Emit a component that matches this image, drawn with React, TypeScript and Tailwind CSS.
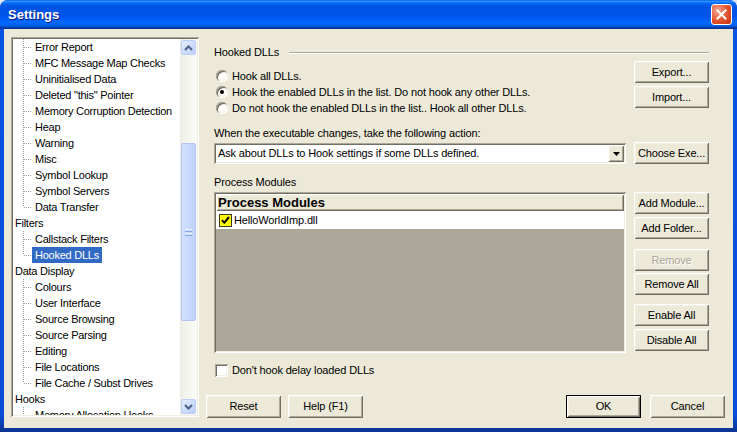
import React from 'react';

const sunken =
  'shadow-[inset_1px_1px_0_#aca899,inset_-1px_-1px_0_#ffffff,inset_2px_2px_0_#716f64,inset_-2px_-2px_0_#f1efe2]';
const raised =
  'shadow-[inset_1px_1px_0_#ffffff,inset_-1px_-1px_0_#716f64,inset_2px_2px_0_#f1efe2,inset_-2px_-2px_0_#aca899]';

type TreeItem = { t: string; root?: boolean; last?: boolean; sel?: boolean };

const TREE: TreeItem[] = [
  { t: 'Error Report' },
  { t: 'MFC Message Map Checks' },
  { t: 'Uninitialised Data' },
  { t: 'Deleted "this" Pointer' },
  { t: 'Memory Corruption Detection' },
  { t: 'Heap' },
  { t: 'Warning' },
  { t: 'Misc' },
  { t: 'Symbol Lookup' },
  { t: 'Symbol Servers' },
  { t: 'Data Transfer', last: true },
  { t: 'Filters', root: true },
  { t: 'Callstack Filters' },
  { t: 'Hooked DLLs', last: true, sel: true },
  { t: 'Data Display', root: true },
  { t: 'Colours' },
  { t: 'User Interface' },
  { t: 'Source Browsing' },
  { t: 'Source Parsing' },
  { t: 'Editing' },
  { t: 'File Locations' },
  { t: 'File Cache / Subst Drives', last: true },
  { t: 'Hooks', root: true },
  { t: 'Memory Allocation Hooks' },
];

function Btn({
  label,
  size = 'w-[75px] h-[22px]',
  disabled = false,
  def = false,
  className = '',
}: {
  label: string;
  size?: string;
  disabled?: boolean;
  def?: boolean;
  className?: string;
}) {
  return (
    <div className={`${size} ${className} ${def ? 'border border-black' : ''} flex shrink-0 bg-[#ece9d8]`}>
      <div
        className={`flex flex-1 items-center justify-center ${raised} ${
          disabled ? 'text-[#aca899] [text-shadow:1px_1px_0_#ffffff]' : 'text-black'
        }`}
      >
        {label}
      </div>
    </div>
  );
}

function Radio({ checked = false }: { checked?: boolean }) {
  return (
    <div
      className={`flex h-[12px] w-[12px] shrink-0 items-center justify-center rounded-full bg-white shadow-[inset_1px_1px_0_#aca899,inset_-1px_-1px_0_#ffffff,inset_2px_2px_0_#716f64,inset_-2px_-2px_0_#f1efe2]`}
    >
      {checked && <div className="h-[4px] w-[4px] rounded-full bg-black" />}
    </div>
  );
}

function TreeRow({ item }: { item: TreeItem }) {
  if (item.root) {
    return (
      <div className="flex h-[16px] shrink-0 items-center pl-[2px] leading-[16px] whitespace-nowrap">{item.t}</div>
    );
  }
  return (
    <div className="flex h-[16px] shrink-0 items-center whitespace-nowrap">
      <svg width="19" height="16" className="shrink-0">
        <line
          x1="10.5"
          y1="0"
          x2="10.5"
          y2={item.last ? 8 : 16}
          stroke="#a0a0a0"
          strokeWidth="1"
          strokeDasharray="1 1"
        />
        <line x1="11" y1="8.5" x2="19" y2="8.5" stroke="#a0a0a0" strokeWidth="1" strokeDasharray="1 1" />
      </svg>
      <span
        className={`h-[16px] px-[3px] leading-[16px] ${item.sel ? 'bg-[#316ac5] text-white' : 'text-black'}`}
      >
        {item.t}
      </span>
    </div>
  );
}

function ScrollArrow({ up }: { up?: boolean }) {
  return (
    <div className="flex h-[17px] w-[17px] shrink-0 p-[1px]">
      <div className="flex flex-1 items-center justify-center rounded-[2px] border border-[#b9cdf6] bg-[linear-gradient(135deg,#e3ebfe,#bccffa)]">
        <svg width="9" height="6" viewBox="0 0 9 6">
          <polyline
            points={up ? '1,5 4.5,1.5 8,5' : '1,1 4.5,4.5 8,1'}
            fill="none"
            stroke="#4d6185"
            strokeWidth="2"
          />
        </svg>
      </div>
    </div>
  );
}

function Tree() {
  return (
    <div className={`flex h-[380px] w-[188px] shrink-0 bg-white p-[2px] ${sunken}`}>
      <div className="flex min-w-0 flex-1 flex-col overflow-hidden tracking-[-0.25px]">
        {TREE.map((it, i) => (
          <TreeRow key={i} item={it} />
        ))}
      </div>
      <div className="flex w-[17px] shrink-0 flex-col bg-[linear-gradient(90deg,#eeede5,#fdfdfa)]">
        <ScrollArrow up />
        <div className="flex flex-1 flex-col px-[1px]">
          <div className="mt-[87px] flex h-[178px] items-center justify-center rounded-[2px] border border-[#b2c6f5] bg-[linear-gradient(90deg,#d3e0fd,#c0d2fa)]">
            <div className="flex flex-col gap-[1px]">
              <div className="h-[1px] w-[7px] bg-[#eef3fe]" />
              <div className="h-[1px] w-[7px] bg-[#8fa9e6]" />
              <div className="h-[1px] w-[7px] bg-[#eef3fe]" />
              <div className="h-[1px] w-[7px] bg-[#8fa9e6]" />
            </div>
          </div>
        </div>
        <ScrollArrow />
      </div>
    </div>
  );
}

function RightPanel() {
  return (
    <div className="ml-[7px] flex flex-1 flex-col">
      <div className="flex flex-col pl-[8px] pr-[16px]">
        {/* group header */}
        <div className="mt-[9px] flex h-[13px] items-center leading-[13px]">
          <span>Hooked DLLs</span>
          <div className="ml-[10px] h-[2px] flex-1 border-t border-b border-t-[#aca899] border-b-white" />
        </div>

        {/* radios + export/import */}
        <div className="mt-[2px] flex justify-between">
          <div className="flex flex-col pt-[7px] pl-[2px]">
            <div className="flex h-[16px] items-center gap-[4px]">
              <Radio />
              <span>Hook all DLLs.</span>
            </div>
            <div className="flex h-[16px] items-center gap-[4px]">
              <Radio checked />
              <span>Hook the enabled DLLs in the list. Do not hook any other DLLs.</span>
            </div>
            <div className="flex h-[16px] items-center gap-[4px]">
              <Radio />
              <span>Do not hook the enabled DLLs in the list.. Hook all other DLLs.</span>
            </div>
          </div>
          <div className="flex flex-col gap-[3px]">
            <Btn label="Export..." />
            <Btn label="Import..." />
          </div>
        </div>

        <div className="mt-[11px] h-[13px] leading-[13px]">When the executable changes, take the following action:</div>

        {/* dropdown row */}
        <div className="mt-[2px] flex h-[22px] justify-between">
          <div className={`mt-[1px] flex h-[21px] w-[412px] bg-white p-[2px] ${sunken}`}>
            <div className="flex flex-1 items-center pl-[2px] whitespace-nowrap">
              Ask about DLLs to Hook settings if some DLLs defined.
            </div>
            <div className={`flex h-full w-[16px] items-center justify-center bg-[#ece9d8] ${raised}`}>
              <svg width="7" height="4" viewBox="0 0 7 4">
                <polygon points="0,0 7,0 3.5,4" fill="#000" />
              </svg>
            </div>
          </div>
          <Btn label="Choose Exe..." />
        </div>

        <div className="mt-[12px] h-[13px] leading-[13px]">Process Modules</div>

        {/* list + side buttons */}
        <div className="mt-[3px] flex justify-between">
          <div className={`flex h-[161px] w-[412px] flex-col bg-[#aca899] p-[2px] ${sunken}`}>
            <div
              className={`flex h-[17px] shrink-0 items-center bg-[#ece9d8] pl-[2px] text-[13px] font-bold tracking-normal ${raised}`}
            >
              Process Modules
            </div>
            <div className="flex h-[18px] shrink-0 items-center gap-[2px] bg-white pl-[3px]">
              <svg width="13" height="13" viewBox="0 0 13 13" className="shrink-0">
                <rect x="0.5" y="0.5" width="12" height="12" fill="#ffff00" stroke="#3a3a1a" />
                <path d="M3 6.2 L5.3 8.8 L10 3" fill="none" stroke="#000" strokeWidth="2" />
              </svg>
              <span>HelloWorldImp.dll</span>
            </div>
          </div>
          <div className="flex w-[75px] flex-col">
            <Btn label="Add Module..." />
            <Btn label="Add Folder..." className="mt-[3px]" />
            <Btn label="Remove" disabled className="mt-[10px]" />
            <Btn label="Remove All" className="mt-[2px]" />
            <Btn label="Enable All" className="mt-[9px]" />
            <Btn label="Disable All" className="mt-[3px]" />
          </div>
        </div>

        {/* checkbox */}
        <div className="mt-[11px] flex h-[13px] items-center gap-[4px] pl-[1px]">
          <div className={`h-[13px] w-[13px] shrink-0 bg-white ${sunken}`} />
          <span>Don't hook delay loaded DLLs</span>
        </div>
      </div>

      {/* bottom buttons */}
      <div className="mt-[18px] flex">
        <Btn label="Reset" size="w-[75px] h-[23px]" />
        <Btn label="Help (F1)" size="w-[75px] h-[23px]" className="ml-[7px]" />
        <Btn label="OK" size="w-[75px] h-[23px]" def className="ml-auto" />
        <Btn label="Cancel" size="w-[75px] h-[23px]" className="ml-[9px]" />
      </div>
    </div>
  );
}

export default function App() {
  return (
    <div className="h-[432px] w-[737px] overflow-hidden bg-[#dfe6f3] font-['Liberation_Sans',Arial,sans-serif] text-[11px] tracking-[-0.15px] text-black">
      <div className="flex h-full flex-col rounded-t-[8px] bg-[linear-gradient(180deg,#0a53e3,#0a4ed8_96%,#0b3391)]">
        {/* title bar */}
        <div className="flex h-[29px] shrink-0 items-center rounded-t-[8px] bg-[linear-gradient(180deg,#0058ee_0%,#3593ff_4%,#288eff_6%,#127dff_8%,#036ffc_10%,#0262ee_14%,#0057e5_20%,#0054e3_24%,#0055eb_56%,#005bf5_66%,#026afe_76%,#0062ef_86%,#0052d6_92%,#0040ab_94%,#003092_100%)] pl-[8px] pr-[5px]">
          <span className="text-[13px] font-bold tracking-normal text-white [text-shadow:1px_1px_0_#0a1883]">
            Settings
          </span>
          <div className="ml-auto flex h-[21px] w-[21px] items-center justify-center rounded-[3px] border border-white bg-[radial-gradient(circle_at_30%_30%,#f5a48c,#e2522d_55%,#c23512)]">
            <svg width="11" height="11" viewBox="0 0 11 11">
              <path d="M1.5 1.5 L9.5 9.5 M9.5 1.5 L1.5 9.5" stroke="#fff" strokeWidth="2" strokeLinecap="square" />
            </svg>
          </div>
        </div>
        {/* body */}
        <div className="mx-[4px] mb-[4px] flex flex-1 bg-[#ece9d8] pt-[8px] pr-[8px] pl-[7px]">
          <Tree />
          <RightPanel />
        </div>
      </div>
    </div>
  );
}
